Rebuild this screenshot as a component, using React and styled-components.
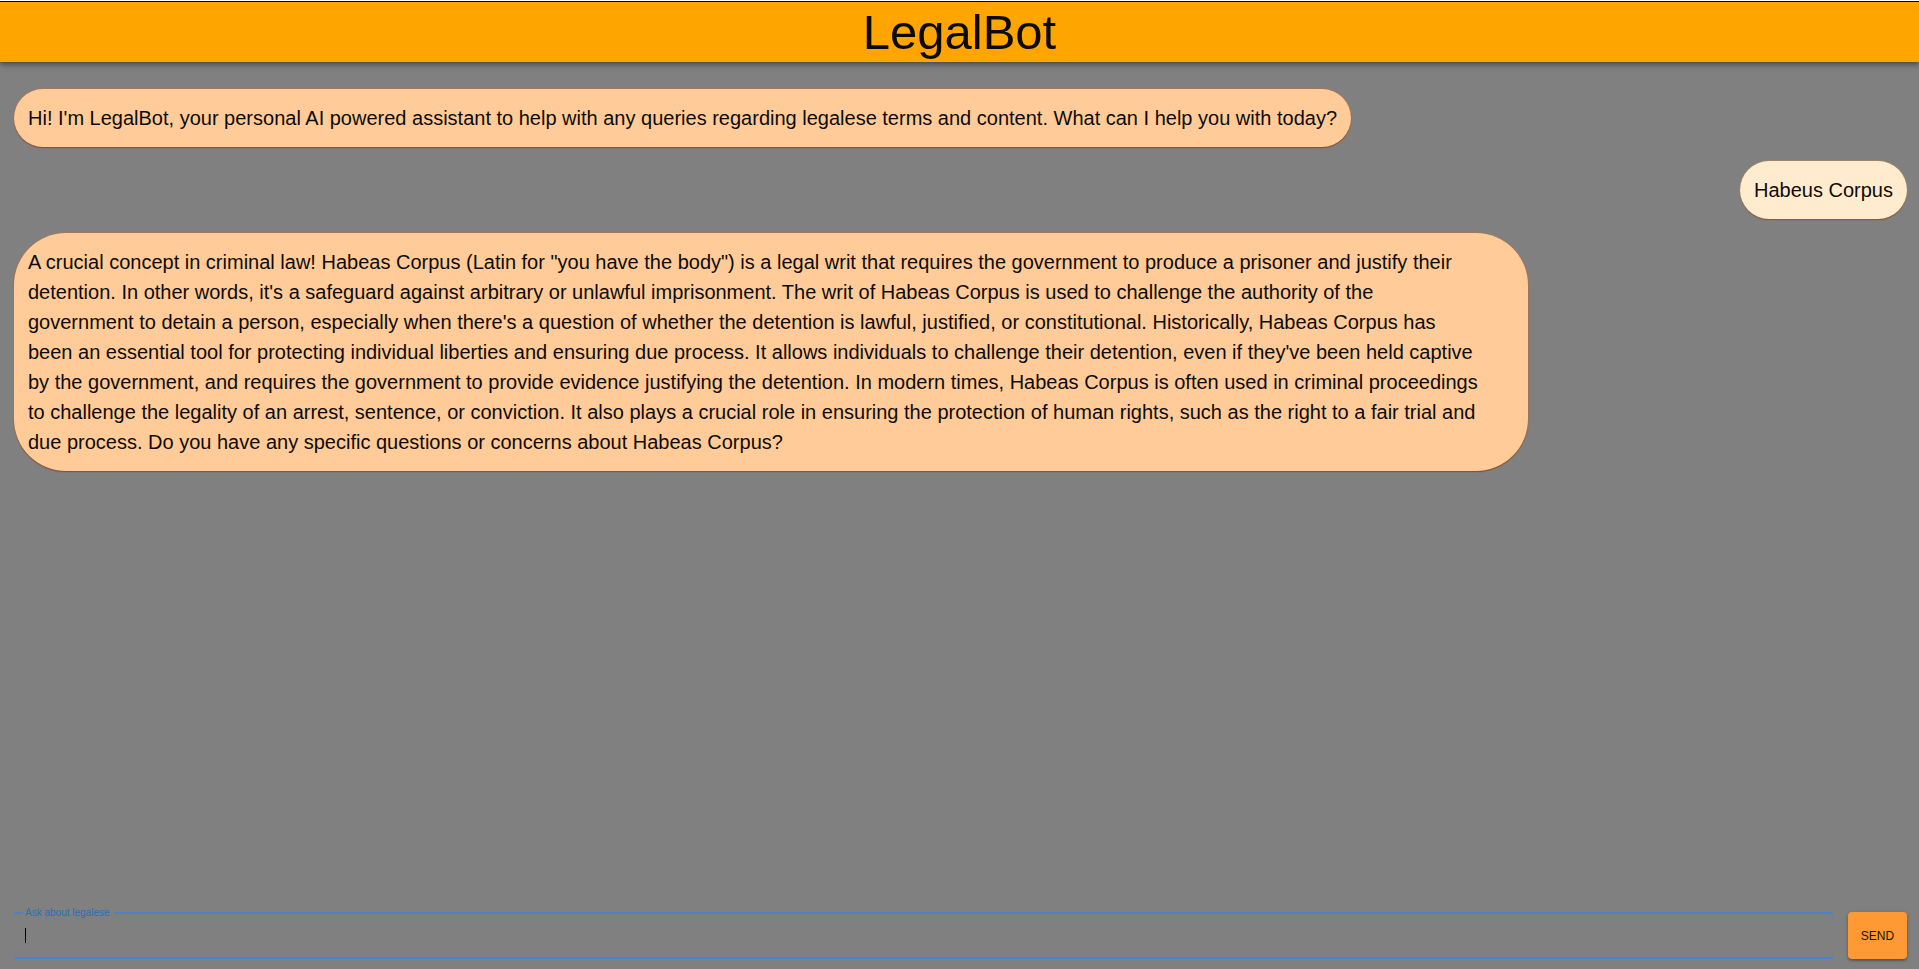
import React, { useState } from 'react';
import styled, { createGlobalStyle } from 'styled-components';

const GlobalStyle = createGlobalStyle`
  *, *::before, *::after { box-sizing: border-box; }
  body {
    margin: 0;
    background: #808080;
    color: #0d0b08;
    font-family: "Liberation Sans", Arial, sans-serif;
  }
`;

const Page = styled.div`
  display: flex;
  flex-direction: column;
  min-height: 100vh;
`;

const Header = styled.header`
  display: flex;
  justify-content: center;
  align-items: center;
  height: 62px;
  border-top: 1px solid #fff;
  background: #ffa500;
  box-shadow: inset 0 1px #000, 0 2px 4px rgba(0, 0, 0, 0.3), 0 4px 6px rgba(0, 0, 0, 0.16);
`;

const Title = styled.h1`
  margin: 0;
  font-size: 49px;
  line-height: 60px;
  font-weight: 400;
`;

const Messages = styled.main`
  flex: 1;
  display: flex;
  flex-direction: column;
  gap: 14px;
  padding: 27px 12px 14px 14px;
`;

const Bubble = styled.p`
  align-self: ${({ $user }) => ($user ? 'flex-end' : 'flex-start')};
  width: ${({ $wide }) => ($wide ? '80%' : 'auto')};
  max-width: 80%;
  margin: 0;
  padding: 14px;
  border-radius: 52px;
  background: ${({ $user }) => ($user ? '#ffebcd' : '#ffcc99')};
  box-shadow: 0 0 0 1px ${({ $user }) => ($user ? 'rgba(190, 140, 70, 0.4)' : 'rgba(200, 110, 60, 0.4)')},
    0 1px 1px rgba(70, 35, 10, 0.7);
  font-size: 20px;
  line-height: 30px;
  white-space: pre-line;
`;

const Composer = styled.form`
  display: flex;
  align-items: flex-end;
  gap: 14px;
  padding: 0 12px 10px 13px;
`;

const Field = styled.fieldset`
  position: relative;
  flex: 1;
  min-width: 0;
  height: 52px;
  margin: 0;
  padding: 0 9px;
  border: 2px solid #4f80d0;
  border-left: 1px solid #7b7f86;
  border-right: 1px solid #7b7f86;
  border-radius: 4px;
`;

const Legend = styled.legend`
  padding: 0 4px 0 2px;
  color: #2472bc;
  font-size: 10px;
  line-height: 12px;
`;

const TextInput = styled.input`
  display: block;
  width: 100%;
  height: 32px;
  padding: 0 2px;
  border: 0;
  outline: 0;
  background: transparent;
  color: inherit;
  caret-color: ${({ value }) => (value ? '#000' : 'transparent')};
  font: inherit;
  font-size: 14px;
`;

const Caret = styled.span`
  position: absolute;
  left: 11px;
  bottom: 14px;
  width: 1px;
  height: 15px;
  background: #000;
  pointer-events: none;
`;

const SendButton = styled.button`
  width: 59px;
  height: 47px;
  padding: 0;
  border: 0;
  border-radius: 4px;
  background: #ff9933;
  box-shadow: 0 2px 2px rgba(0, 0, 0, 0.2), 0 1px 4px rgba(0, 0, 0, 0.2);
  color: #1a1208;
  font: inherit;
  font-size: 12px;
  text-transform: uppercase;
  cursor: pointer;
`;

const initialMessages = [
  {
    text: "Hi! I'm LegalBot, your personal AI powered assistant to help with any queries regarding legalese terms and content. What can I help you with today?",
  },
  { user: true, text: 'Habeus Corpus' },
  {
    wide: true,
    text: `A crucial concept in criminal law! Habeas Corpus (Latin for "you have the body") is a legal writ that requires the government to produce a prisoner and justify their
detention. In other words, it's a safeguard against arbitrary or unlawful imprisonment. The writ of Habeas Corpus is used to challenge the authority of the
government to detain a person, especially when there's a question of whether the detention is lawful, justified, or constitutional. Historically, Habeas Corpus has
been an essential tool for protecting individual liberties and ensuring due process. It allows individuals to challenge their detention, even if they've been held captive
by the government, and requires the government to provide evidence justifying the detention. In modern times, Habeas Corpus is often used in criminal proceedings
to challenge the legality of an arrest, sentence, or conviction. It also plays a crucial role in ensuring the protection of human rights, such as the right to a fair trial and
due process. Do you have any specific questions or concerns about Habeas Corpus?`,
  },
];

export default function App() {
  const [messages, setMessages] = useState(initialMessages);
  const [draft, setDraft] = useState('');

  const send = (event) => {
    event.preventDefault();
    if (!draft.trim()) return;
    setMessages([...messages, { user: true, text: draft }]);
    setDraft('');
  };

  return (
    <Page>
      <GlobalStyle />
      <Header>
        <Title>LegalBot</Title>
      </Header>
      <Messages>
        {messages.map((message, index) => (
          <Bubble key={index} $user={message.user} $wide={message.wide}>
            {message.text}
          </Bubble>
        ))}
      </Messages>
      <Composer onSubmit={send}>
        <Field>
          <Legend>
            <label htmlFor="question">Ask about legalese</label>
          </Legend>
          <TextInput
            id="question"
            autoFocus
            autoComplete="off"
            value={draft}
            onChange={(event) => setDraft(event.target.value)}
          />
          {draft === '' && <Caret aria-hidden="true" />}
        </Field>
        <SendButton type="submit">Send</SendButton>
      </Composer>
    </Page>
  );
}
